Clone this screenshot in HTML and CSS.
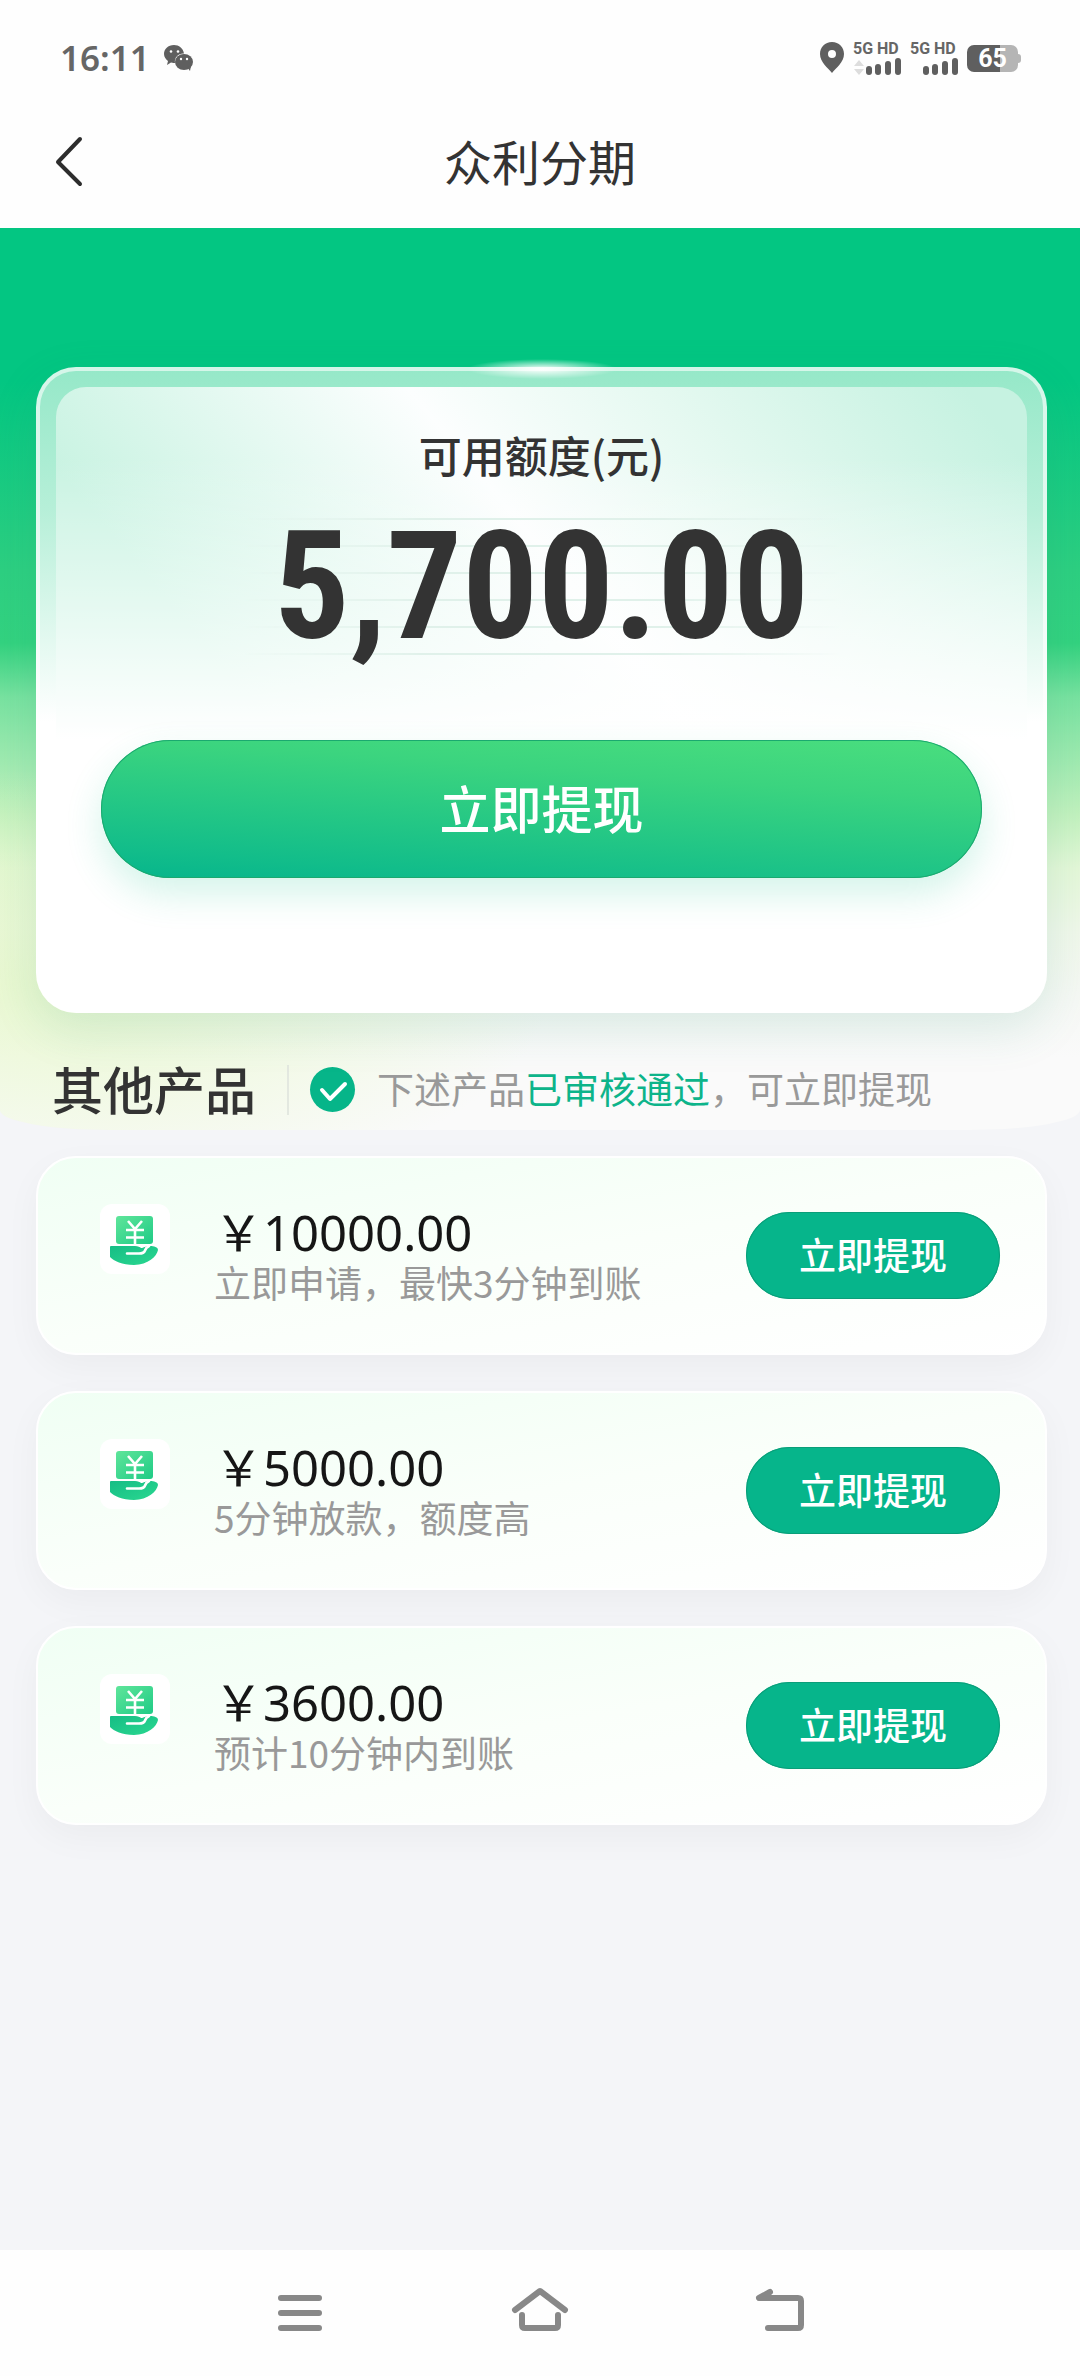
FILE: index.html
```html
<!DOCTYPE html>
<html lang="zh-CN">
<head>
<meta charset="utf-8">
<meta name="viewport" content="width=device-width, initial-scale=1">
<title>众利分期</title>
<link rel="stylesheet" href="styles.css">
</head>
<body>
<svg class="defs" aria-hidden="true">
  <defs>
    <linearGradient id="bill" x1="0" y1="0" x2="1" y2="1"><stop offset="0" stop-color="#5fe59a"/><stop offset="1" stop-color="#1fcb86"/></linearGradient>
    <linearGradient id="palm" x1="0" y1="0" x2="1" y2="1"><stop offset="0" stop-color="#16bd85"/><stop offset="1" stop-color="#2ad890"/></linearGradient>
    <symbol id="loan" viewBox="0 0 70 70">
      <rect x="16" y="12" width="37" height="28" rx="3" fill="url(#bill)"/>
      <path d="M28 17l7 8 7-8M26 26h18M26 33.500h18M35 25v16" fill="none" stroke="#fff" stroke-width="2.600"/>
      <path d="M11 42h24c3 0 5 1 6 2 3 0 4-2 9-2 4 0 8 1 8 4-1 6-10 15-24 15-12 0-20-4-24-8V43q0-1 1-1z" fill="url(#palm)"/>
      <path d="M27 49.500h12q5 0 6-3 1-3 4-4.500" fill="none" stroke="#fff" stroke-width="2.600" stroke-linecap="round"/>
    </symbol>
  </defs>
</svg>
<div class="page">
  <header class="top">
    <div class="status">
      <div class="status-left">
        <span class="clock">16:11</span>
        <svg width="30" height="26" viewBox="0 0 30 26" fill="#5f5f5f" aria-hidden="true">
          <path d="M10 0C4 0 0 4 0 9c0 3 2 5.500 4 7l-1 4 4-2.500c2 .5 3 .5 4 .5C10 12 15 8 20 8.500 19 3 15 0 10 0z"/>
          <ellipse cx="20" cy="17" rx="9" ry="8"/><path d="M23 22l4-1-1 5z"/>
          <g fill="#fff"><circle cx="7" cy="6.500" r="1.300"/><circle cx="14" cy="6.500" r="1.300"/><circle cx="17" cy="14" r="1.200"/><circle cx="23" cy="14" r="1.200"/></g>
        </svg>
      </div>
      <div class="status-right">
        <svg width="24" height="32" viewBox="0 0 24 32" fill="#5f5f5f" aria-hidden="true"><path fill-rule="evenodd" d="M12 0C5 0 0 5 0 12c0 8 8 14 12 19 4-5 12-11 12-19C24 5 19 0 12 0zm0 8a4 4 0 1 1 0 8 4 4 0 0 1 0-8z"/></svg>
        <div class="signal"><span>5G HD</span>
          <svg width="48" height="18" viewBox="0 0 48 18" fill="#5f5f5f" aria-hidden="true"><path fill="#ddd" d="M1 8l5-6 5 6zM1 11h10l-5 6z"/><rect x="13" y="8" width="6" height="9" rx="3"/><rect x="22" y="6" width="6" height="11" rx="3"/><rect x="32" y="3" width="6" height="14" rx="3"/><rect x="42" y="0" width="6" height="17" rx="3"/></svg>
        </div>
        <div class="signal"><span>5G HD</span>
          <svg width="48" height="18" viewBox="0 0 48 18" fill="#5f5f5f" aria-hidden="true"><rect x="13" y="8" width="6" height="9" rx="3"/><rect x="22" y="6" width="6" height="11" rx="3"/><rect x="32" y="3" width="6" height="14" rx="3"/><rect x="42" y="0" width="6" height="17" rx="3"/></svg>
        </div>
        <div class="battery"><span>65</span></div>
      </div>
    </div>
    <div class="titlebar">
      <button class="back" aria-label="返回"><svg width="28" height="50" viewBox="0 0 28 50" fill="none" stroke="#2d2d2d" stroke-width="4" stroke-linecap="round" stroke-linejoin="round"><path d="M26 4L4 27l22 22"/></svg></button>
      <h1>众利分期</h1>
    </div>
  </header>

  <main>
    <div class="hero">
      <section class="quota">
        <div class="panel">
          <p class="label">可用额度(元)</p>
          <p class="amount"><span>5,700.00</span></p>
        </div>
        <button class="cta">立即提现</button>
      </section>
      <div class="heading">
        <h2>其他产品</h2>
        <svg class="tick" width="45" height="45" viewBox="0 0 45 45" aria-hidden="true"><circle cx="22.500" cy="22.500" r="22.500" fill="#06b589"/><path d="M12 23l8 9 15-15" fill="none" stroke="#fff" stroke-width="4" stroke-linecap="round" stroke-linejoin="round"/></svg>
        <p>下述产品<em>已审核通过</em>，可立即提现</p>
      </div>
    </div>
    <ul class="products">
      <li>
        <svg class="icon" viewBox="0 0 70 70" aria-hidden="true"><use href="#loan"/></svg>
        <div class="info"><strong>￥10000.00</strong><span>立即申请，最快3分钟到账</span></div>
        <button>立即提现</button>
      </li>
      <li>
        <svg class="icon" viewBox="0 0 70 70" aria-hidden="true"><use href="#loan"/></svg>
        <div class="info"><strong>￥5000.00</strong><span>5分钟放款，额度高</span></div>
        <button>立即提现</button>
      </li>
      <li>
        <svg class="icon" viewBox="0 0 70 70" aria-hidden="true"><use href="#loan"/></svg>
        <div class="info"><strong>￥3600.00</strong><span>预计10分钟内到账</span></div>
        <button>立即提现</button>
      </li>
    </ul>
  </main>

  <nav class="sysnav" aria-label="系统导航">
    <button aria-label="菜单"><svg width="60" height="46" viewBox="0 0 60 46"><path d="M11 8h38M11 23h38M11 38h38"/></svg></button>
    <button aria-label="主页"><svg width="60" height="46" viewBox="0 0 60 46"><path d="M5 20L30 1l25 19M12 25v10q0 3 3 3h30q3 0 3-3V25"/></svg></button>
    <button aria-label="返回上一页"><svg width="60" height="46" viewBox="0 0 60 46"><path d="M20 2L9 8h39q3 0 3 3v24q0 3-3 3H18"/></svg></button>
  </nav>
</div>
</body>
</html>
```
FILE: styles.css
```css
* { box-sizing: border-box; }
body {
  margin: 0;
  background: #f4f5f8;
  color: #333;
  font-family: "Noto Sans CJK SC", sans-serif;
}
h1, h2, p, ul { margin: 0; padding: 0; font-weight: 400; }
button { border: 0; padding: 0; background: none; font-family: inherit; cursor: pointer; }
svg { display: block; flex: none; overflow: visible; }
.defs { position: absolute; width: 0; height: 0; }
.page { min-height: 100vh; display: flex; flex-direction: column; }
main { flex: 1; }

/* status bar and title */
.top { background: #fefefe; }
.status { height: 96px; padding: 20px 62px 0 60px; display: flex; align-items: center; justify-content: space-between; }
.status-left { display: flex; align-items: center; gap: 14px; }
.clock { font: 600 35px/40px "Noto Sans", sans-serif; color: #666; }
.status-right { display: flex; align-items: center; gap: 9px; }
.signal { font: 700 16px/18px "Roboto", sans-serif; color: #666; white-space: nowrap; width: 48px; display: grid; justify-content: end; }
.battery {
  position: relative;
  width: 51px; height: 27px; border-radius: 7px;
  background: linear-gradient(90deg, #5f5f5f 65%, #b5b5b5 65%);
  font: 700 25px/28px "Roboto", sans-serif; color: #fff; text-align: center;
}
.battery::after { content: ""; position: absolute; right: -3px; top: 9px; width: 3px; height: 9px; border-radius: 0 3px 3px 0; background: #b5b5b5; }
.titlebar { height: 132px; padding: 0 54px 4px; display: grid; grid-template-columns: 1fr auto 1fr; align-items: center; }
.titlebar h1 { font-size: 48px; line-height: 64px; }
.back { justify-self: start; }

/* hero */
.hero {
  padding: 139px 33px 18px 36px;
  border-radius: 0 0 110px 110px / 0 0 20px 20px;
  background:
    radial-gradient(ellipse 45% 24% at 6% 84%, rgba(226,248,190,.7), rgba(226,248,190,0)),
    linear-gradient(180deg, #03c682 0, #03c682 17%, #2dcf81 38%, #33d27f 46%, #78e2a0 52%, #9feab0 59%, #c2f1be 65%, #e4f7d8 71%, #f0f7ea 78%, #f6f8f5 86%, #fafafa 92%);
}
.quota {
  position: relative;
  height: 646px; padding: 16px;
  border: 4px solid rgba(255,255,255,.6);
  border-radius: 40px;
  background: linear-gradient(180deg, #95e8c8 0, #b6efd8 22%, #fff 55%) border-box;
  box-shadow: 0 16px 48px rgba(40,150,120,.14);
  text-align: center;
}
.quota::before { content: ""; position: absolute; left: 50%; top: -12px; width: 150px; height: 20px; margin-left: -75px; background: radial-gradient(closest-side, #fff, rgba(255,255,255,0)); }
.panel {
  height: 353px; padding-top: 37px;
  border-radius: 30px 30px 0 0;
  background:
    linear-gradient(180deg, rgba(255,255,255,0) 20%, #fff),
    linear-gradient(50deg, #c9f3e2 18%, #fcfefe 51%, #e6f9f1 70%, #c6f2e1 95%);
}
.label { font-size: 43px; line-height: 60px; font-weight: 500; }
/* fine ruled lines fade out to both sides behind the figure */
.amount {
  display: grid; justify-items: center;
  font: 700 150px/206px "Roboto Condensed", "Roboto", sans-serif;
}
.amount::before, .amount span { grid-area: 1 / 1; }
.amount::before {
  content: "";
  width: 600px; max-width: 100%; height: 140px; margin-top: 34px;
  background: repeating-linear-gradient(180deg, #e0f1ea 0 2px, rgba(255,255,255,0) 2px 27px);
  mask-image: linear-gradient(90deg, transparent, #000 30%, #000 70%, transparent);
}
.amount span { position: relative; }
.cta {
  width: 881px; max-width: 92%; height: 138px; margin-bottom: 0; padding-bottom: 5px; border-radius: 69px;
  background: linear-gradient(184deg, #4ade7e, #3bd47f 30%, #12bd8a 85%, #06b58c);
  box-shadow: inset 0 0 0 1px #1ba96f, 0 16px 36px rgba(40,200,150,.2);
  color: #fff; font-size: 51px; font-weight: 500;
}
.heading { padding: 54px 17px 0 16px; display: flex; align-items: center; height: 99px; }
.heading h2 { font-size: 51px; line-height: 46px; font-weight: 500; padding: 0 31px 4px 0; margin-right: 21px; border-right: 2px solid #e3e8e0; }
.tick { margin-right: 22px; }
.heading p { color: #999; font-size: 37px; line-height: 48px; padding-bottom: 3px; white-space: nowrap; }
.heading em { font-style: normal; color: #0db48a; }

/* products */
.products { list-style: none; padding: 26px 33px 36px 36px; display: grid; gap: 36px; }
.products li {
  height: 199px; padding: 0 45px 0 62px;
  display: flex; align-items: center;
  border: 2px solid #fff; border-radius: 40px;
  background: linear-gradient(170deg, #f0fff4, #fafffa 50%, #fff);
  box-shadow: 0 12px 36px rgba(0,0,0,.04);
}
.icon { width: 70px; height: 70px; margin: 0 44px 34px 0; background: #fff; border-radius: 12px; }
.info { flex: 1; display: grid; white-space: nowrap; padding-bottom: 4px; }
.info strong { font: 400 49px/56px "Noto Sans", "Noto Sans CJK SC", sans-serif; color: #161616; }
.info span { font-size: 37px; line-height: 44px; color: #999; }
.products button { width: 254px; height: 87px; padding-bottom: 4px; border-radius: 44px; background: #06b58b; box-shadow: inset 0 0 0 1px #0a9e79; color: #fff; font-size: 37px; font-weight: 500; }

/* system navigation */
.sysnav { height: 126px; padding: 0 180px; display: grid; grid-template-columns: repeat(3, 1fr); place-items: center; background: #fefefe; }
.sysnav svg { fill: none; stroke: #888; stroke-width: 6; stroke-linecap: round; stroke-linejoin: round; }
```
